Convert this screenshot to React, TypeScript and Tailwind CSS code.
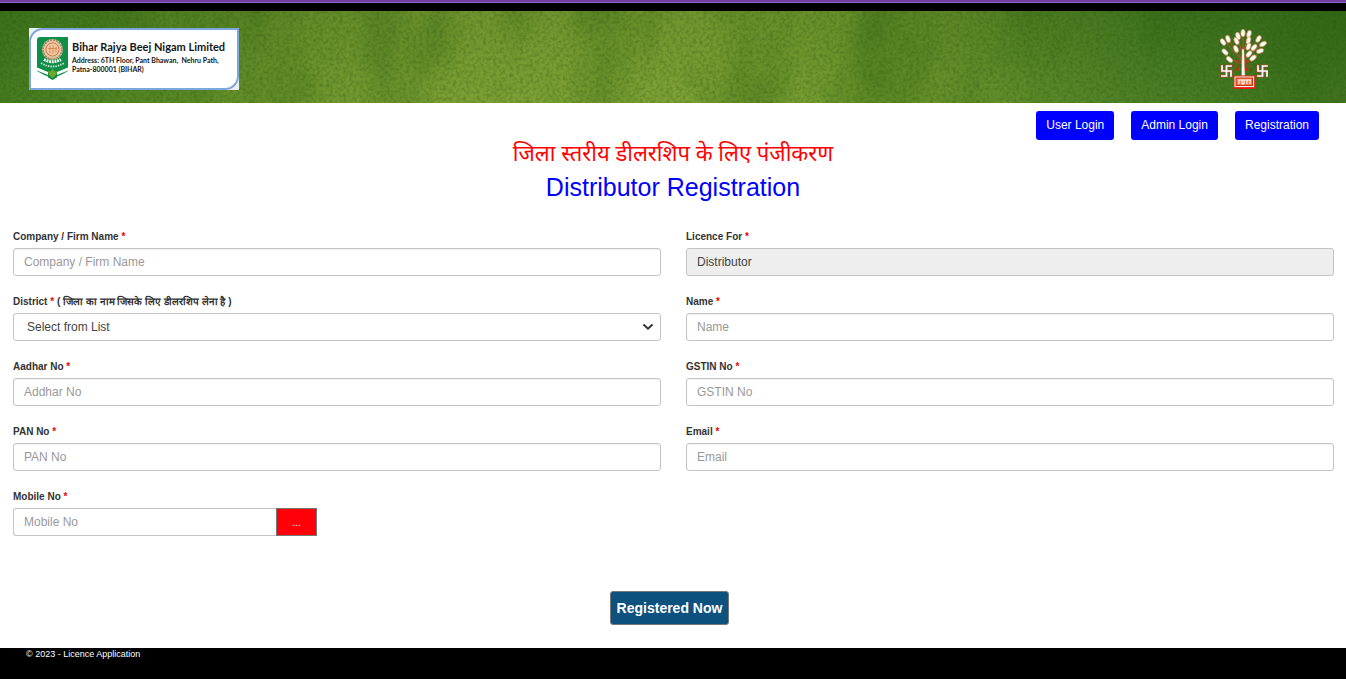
import type { ReactNode } from "react";

const inputClass =
  "block h-7 w-full rounded-[3px] border border-[#c4c4c4] bg-white px-[10px] text-[12px] text-[#444] placeholder:text-[#999] shadow-[inset_0_1px_1px_rgba(0,0,0,0.06)] outline-none focus:border-[#66afe9]";

function Field({
  id,
  label,
  note,
  children,
}: {
  id: string;
  label: string;
  note?: string;
  children: ReactNode;
}) {
  return (
    <div>
      <label htmlFor={id} className="mb-1 block h-[14px] text-[10px] leading-[14px] font-bold whitespace-nowrap text-[#333]">
        {label} <span className="text-[#f00000]">*</span>
        {note && <span> {note}</span>}
      </label>
      {children}
    </div>
  );
}

function Crest() {
  return (
    <svg viewBox="0 0 31 43" className="h-[43px] w-[31px] shrink-0" aria-hidden="true">
      <path d="M0 3Q0 0 3 0H31V34L15.500 43L0 34Z" fill="#0d8f49" />
      <circle cx="15.500" cy="12.500" r="10.500" fill="#dcc4a4" />
      <circle cx="15.500" cy="12.500" r="9.500" fill="none" stroke="#a9805c" strokeWidth="1.500" strokeDasharray="2 1" />
      <circle cx="15.500" cy="12.500" r="6.500" fill="#f3c8a0" stroke="#d0804c" />
      <path d="M13 8.500v8M16 8.500v8M19 9.500v6M11 11.500h9" stroke="#d98a58" strokeWidth="1" />
      <path d="M7 22.500Q15.500 27 24 22.500" fill="none" stroke="#eef3ea" strokeWidth="3" strokeDasharray="2 0.700" />
      <path d="M4 26Q15.500 33 27 26" fill="none" stroke="#cfe3d3" strokeWidth="1.800" strokeDasharray="1.500 1" />
      <path d="M0 30.500L11 35V38L0 33.500ZM31 30.500L20 35V38L31 33.500Z" fill="#fff" />
      <path d="M0 35.500L11 39.500V41.500L0 37.500ZM31 35.500L20 39.500V41.500L31 37.500Z" fill="#fff" />
      <path d="M15.500 31.500L17.500 34.500L20 34L19 38L15.500 41L12 38L11 34L13.500 34.500Z" fill="#73a72c" />
    </svg>
  );
}

const leaves: [number, number, number][] = [
  [23, 5, 0], [18, 8, -15], [29, 6, 15], [8, 11, -15], [3, 14, -35], [16.5, 13, -25],
  [28.5, 12.5, 15], [38.500, 11, 30], [43, 16, 60], [28.5, 18.5, 20], [34, 19.5, 40], [5, 24, -45],
  [16, 21, -25], [40, 23, 70], [29, 26, 40], [9.5, 31.5, -50], [33, 30, 50],
];

const sideMarks = [
  "M2 38V43H11M6.500 38V48M2 48H6.500M6.500 38H11M11 43V48",
  "M38 38V43H47M42.500 38V48M38 48H42.500M42.500 38H47M47 43V48",
];

function StateEmblem() {
  return (
    <svg viewBox="0 0 48 61" className="h-[61px] w-12 shrink-0" role="img" aria-label="Bihar">
      <g fill="none" stroke="#b4552c" strokeWidth="1">
        <path d="M23 40V6M23 34L5 14M23 36L10 31L5 24M23 33L8 11M23 28L17 8M23 25L29 6M24 33L38 11M24 35L34 30L40 23M24 31L43 16" />
        <path d="M19 32q-4 2-4 6t3 5q2-4 1-11M26 32q4 2 4 6t-3 5q-2-4-1-11" stroke="#e32414" />
      </g>
      {leaves.map(([x, y, r]) => (
        <ellipse
          key={`${x}-${y}`}
          cx={x}
          cy={y}
          rx="2.200"
          ry="3.800"
          transform={`rotate(${r} ${x} ${y})`}
          fill="#fffdf8"
          stroke="#d08a5c"
          strokeWidth="0.700"
        />
      ))}
      <path d="M22 21H24L25 48H21.500Z" fill="#fff" stroke="#c86a45" strokeWidth="0.500" />
      {sideMarks.map((d) => (
        <g key={d} fill="none" strokeLinecap="square">
          <path d={d} stroke="#a8492a" strokeWidth="3.200" />
          <path d={d} stroke="#fff" strokeWidth="1.700" />
        </g>
      ))}
      <rect x="14" y="48" width="20.500" height="12" fill="#fff0df" stroke="#d83a22" />
      <rect x="16" y="50" width="16.500" height="7.500" fill="#e9824f" stroke="#d22b18" />
      <path d="M18 52h13M19 52v4M22 52v4h2v-4M27 52v4M30 52v4" fill="none" stroke="#fff" strokeWidth="1" />
      <path d="M14 60h20.500" stroke="#f01010" strokeWidth="1.500" />
    </svg>
  );
}

function GrassTexture() {
  return (
    <svg className="absolute inset-0 h-full w-full" aria-hidden="true">
      <filter id="grain" x="0" y="0" width="100%" height="100%" colorInterpolationFilters="sRGB">
        <feTurbulence type="fractalNoise" baseFrequency="0.300" numOctaves="2" seed="4" />
        <feColorMatrix values="0 0 0 0 0.150  0 0 0 0 0.320  0 0 0 0 0.050  1.800 0 0 0 -0.700" />
      </filter>
      <filter id="patches" x="0" y="0" width="100%" height="100%" colorInterpolationFilters="sRGB">
        <feTurbulence type="fractalNoise" baseFrequency="0.014 0.008" numOctaves="3" seed="9" />
        <feColorMatrix values="0 0 0 0 0.200  0 0 0 0 0.400  0 0 0 0 0.070  2.200 0 0 0 -0.900" />
      </filter>
      <rect width="100%" height="100%" filter="url(#patches)" opacity="0.450" />
      <rect width="100%" height="100%" filter="url(#grain)" opacity="0.400" />
    </svg>
  );
}

const navLinks = ["User Login", "Admin Login", "Registration"];

export default function App() {
  return (
    <div className="flex min-h-screen flex-col bg-white font-['Liberation_Sans',Arial,sans-serif] text-[12px] text-[#333]">
      <div className="h-[11px] bg-black">
        <div className="h-[3px] border-b border-[#9068c4] bg-[#7040a0]" />
      </div>
      <header className="relative h-[92px] bg-[linear-gradient(180deg,rgba(50,90,15,0.15),rgba(140,175,60,0.15)),linear-gradient(90deg,#3b741c_0%,#4a8022_8%,#67902b_20%,#7b9e34_35%,#7b9f34_52%,#6b942c_65%,#5c8928_74%,#447922_84%,#38711d_92%,#34691b_100%)]">
        <GrassTexture />
        <div className="relative flex items-start justify-between pt-[17px] pr-[78px] pl-[29px]">
          <div className="bg-[#eceffa]">
            <div className="flex h-[62px] w-[210px] rounded-tl-[14px] rounded-br-[14px] border-2 border-[#7ba6de] bg-white pt-[7px] pl-[6px] font-[Lato,sans-serif] font-bold whitespace-nowrap text-[#151515]">
              <Crest />
              <div className="pt-[3px] pl-1">
                <div className="text-[11px] leading-[14px]">Bihar Rajya Beej Nigam Limited</div>
                <div className="pt-[2px] text-[7px] leading-[9px]">
                  Address: 6TH Floor, Pant Bhawan,&nbsp; Nehru Path,
                  <br />
                  Patna-800001 (BIHAR)
                </div>
              </div>
            </div>
          </div>
          <StateEmblem />
        </div>
      </header>

      <nav className="flex justify-end gap-[17px] pt-2 pr-[27px]">
        {navLinks.map((name) => (
          <a key={name} href="#" className="h-[29px] rounded-[3px] bg-[#0000ff] px-[10px] text-[12px] leading-[28px] text-white">
            {name}
          </a>
        ))}
      </nav>

      <main className="flex-1">
        <div className="text-center">
          <h2 className="font-['Noto_Sans_Devanagari','Nirmala_UI',Mangal,sans-serif] text-[22px] leading-8 text-[#ff0000]">
            जिला स्तरीय डीलरशिप के लिए पंजीकरण
          </h2>
          <h1 className="text-[25px] leading-[30px] text-[#0000ff]">Distributor Registration</h1>
        </div>

        <form className="pt-7 pr-3 pl-[13px]" onSubmit={(e) => e.preventDefault()}>
          <div className="grid grid-cols-2 gap-x-[25px] gap-y-[19px]">
            <Field id="company" label="Company / Firm Name">
              <input id="company" className={inputClass} placeholder="Company / Firm Name" />
            </Field>
            <Field id="licence" label="Licence For">
              <input
                id="licence"
                readOnly
                value="Distributor"
                className="block h-7 w-full rounded-[3px] border border-[#c4c4c4] bg-[#eeeeee] px-[10px] text-[12px] text-[#444] outline-none"
              />
            </Field>
            <Field id="district" label="District" note="( जिला का नाम जिसके लिए डीलरशिप लेना है )">
              <div className="relative">
                <select id="district" className="block h-7 w-full appearance-none rounded-[3px] border border-[#c4c4c4] bg-white px-[13px] text-[12px] text-[#444] outline-none">
                  <option>Select from List</option>
                </select>
                <svg viewBox="0 0 12 8" className="pointer-events-none absolute top-[10px] right-[7px] h-2 w-3" aria-hidden="true">
                  <path d="M1.500 1.500L6 5.800L10.500 1.500" fill="none" stroke="#333" strokeWidth="1.900" />
                </svg>
              </div>
            </Field>
            <Field id="name" label="Name">
              <input id="name" className={inputClass} placeholder="Name" />
            </Field>
            <Field id="aadhar" label="Aadhar No">
              <input id="aadhar" className={inputClass} placeholder="Addhar No" />
            </Field>
            <Field id="gstin" label="GSTIN No">
              <input id="gstin" className={inputClass} placeholder="GSTIN No" />
            </Field>
            <Field id="pan" label="PAN No">
              <input id="pan" className={inputClass} placeholder="PAN No" />
            </Field>
            <Field id="email" label="Email">
              <input id="email" type="email" className={inputClass} placeholder="Email" />
            </Field>
            <Field id="mobile" label="Mobile No">
              <div className="flex w-[304px]">
                <input
                  id="mobile"
                  type="tel"
                  placeholder="Mobile No"
                  className="h-7 min-w-0 flex-1 rounded-l-[3px] border border-r-0 border-[#c4c4c4] bg-white px-[10px] text-[12px] text-[#444] placeholder:text-[#999] outline-none"
                />
                <button type="button" className="h-7 w-[41px] border border-[#777] bg-[#ff0008] text-[10px] text-white">
                  ...
                </button>
              </div>
            </Field>
          </div>
          <div className="flex justify-center pt-[55px] pr-2 pb-[23px]">
            <button type="submit" className="h-[34px] rounded-[3px] border border-[#777] bg-[#0d527f] px-[6px] text-[14px] font-bold text-white">
              Registered Now
            </button>
          </div>
        </form>
      </main>

      <footer className="h-[31px] bg-black pl-[26px] text-[9px] leading-3 text-white">© 2023 - Licence Application</footer>
    </div>
  );
}
